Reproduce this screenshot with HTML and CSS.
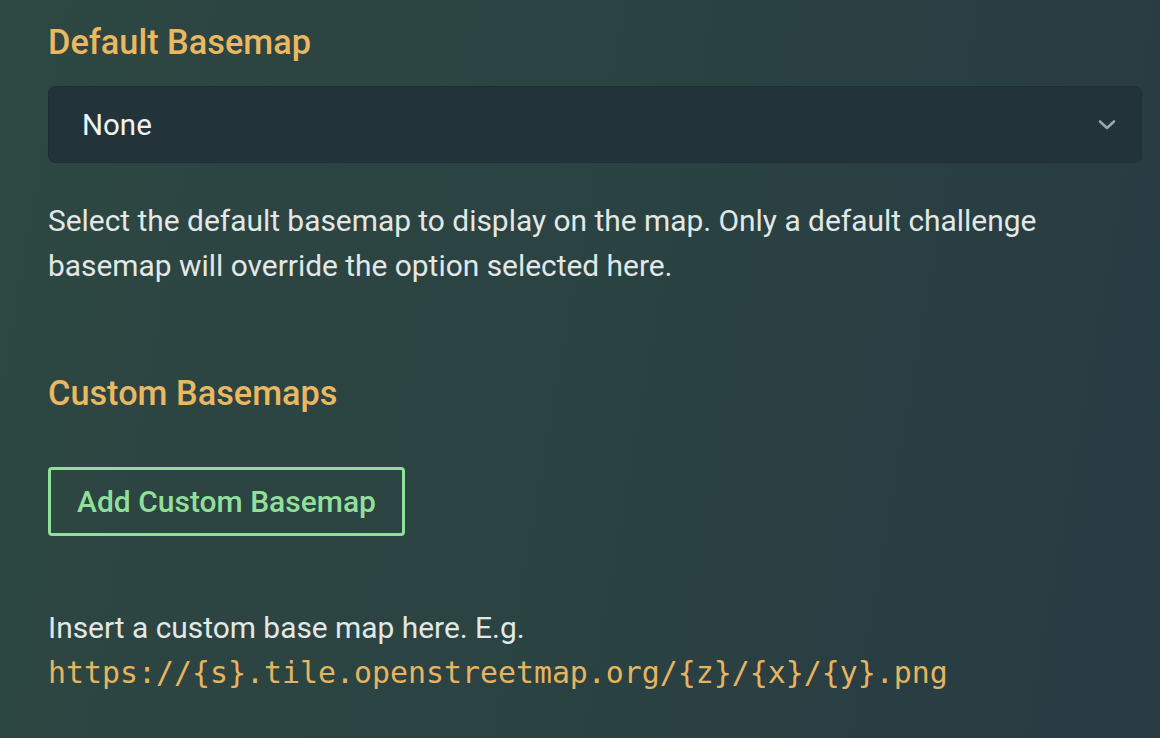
FILE: index.html
```html
<!DOCTYPE html>
<html lang="en">
<head>
<meta charset="utf-8">
<title>Basemap settings</title>
<link rel="stylesheet" href="styles.css">
</head>
<body>
<main class="panel">
  <section class="group">
    <h2 class="heading">Default Basemap</h2>
    <div class="select">
      <span class="select-value">None</span>
      <svg class="chevron" width="20" height="12" viewBox="0 0 20 12" aria-hidden="true">
        <path d="M3 2.5 L10 9 L17 2.5" fill="none" stroke="#9aa5a8" stroke-width="2.6" stroke-linecap="round" stroke-linejoin="round"/>
      </svg>
    </div>
    <p class="help">Select the default basemap to display on the map. Only a default challenge basemap will override the option selected here.</p>
  </section>
  <section class="group custom">
    <h2 class="heading">Custom Basemaps</h2>
    <button class="btn-outline" type="button">Add Custom Basemap</button>
    <p class="help">Insert a custom base map here. E.g.<br><code class="url">https://{s}.tile.openstreetmap.org/{z}/{x}/{y}.png</code></p>
  </section>
</main>
</body>
</html>
```

FILE: styles.css
```css
* { box-sizing: border-box; }
html, body { margin: 0; padding: 0; }
body {
  width: 1160px;
  height: 738px;
  overflow: hidden;
  font-family: Roboto, "Noto Sans", sans-serif;
  background: linear-gradient(100deg, #2d4742 0%, #2b4342 45%, #283b43 100%);
  color: #e4e9e7;
}
.panel {
  padding: 21px 18px 0 48px;
}
.heading {
  margin: 0;
  font-size: 34.3px;
  font-weight: 500;
  line-height: 42px;
  color: #ebb862;
}
.select {
  margin-top: 23px;
  height: 77px;
  display: flex;
  align-items: center;
  justify-content: space-between;
  padding: 0 24px 0 33px;
  background: #22343a;
  border: 1px solid #1f3035;
  border-radius: 7px;
}
.select-value {
  font-size: 29.5px;
  color: #f1f3f2;
}
.chevron { display: block; }
.help {
  margin: 35px 0 0;
  font-size: 29.9px;
  line-height: 45px;
  color: #e3e8e6;
}
.custom { margin-top: 84px; }
.btn-outline {
  display: block;
  margin-top: 53px;
  height: 69px;
  width: 357px;
  padding: 0;
  background: transparent;
  border: 3px solid #90df9b;
  border-radius: 4px;
  font-family: Roboto, sans-serif;
  font-size: 30px;
  font-weight: 500;
  color: #90df9b;
}
.custom .help { margin-top: 69px; }
.url {
  font-family: "DejaVu Sans Mono", monospace;
  font-size: 29.9px;
  color: #e6b45f;
}
```
